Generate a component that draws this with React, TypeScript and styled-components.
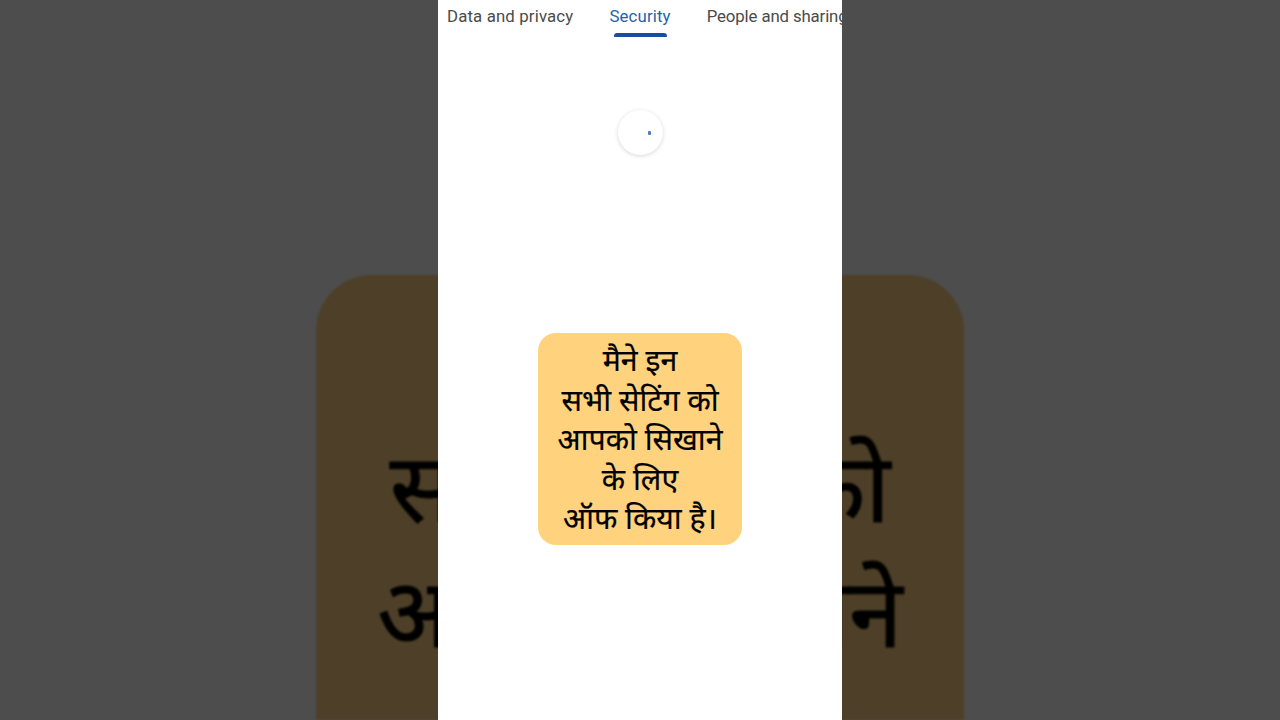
import styled, { createGlobalStyle } from 'styled-components'

const lines = ['मैने इन', 'सभी सेटिंग को', 'आपको सिखाने', 'के लिए', 'ऑफ किया है।']
const tabs = [
    { label: 'Data and privacy', active: false, tracking: 0.15 },
    { label: 'Security', active: true, tracking: 0.15 },
    { label: 'People and sharing', active: false, tracking: -0.12 },
]

const GlobalStyle = createGlobalStyle`
    html, body {
        margin: 0;
        height: 100%;
        background: #4d4d4d;
        overflow: hidden;
    }
    #root {
        height: 100%;
    }
`

const App = () => {
    return (
        <Stage>
            <GlobalStyle />
            <Backdrop>
                <BackdropCard>
                    {lines.map((line) => (
                        <BackdropLine key={line}>{line}</BackdropLine>
                    ))}
                </BackdropCard>
            </Backdrop>
            <Phone>
                <TabBar>
                    {tabs.map((tab) => (
                        <Tab key={tab.label} $active={tab.active} $tracking={tab.tracking}>
                            {tab.label}
                        </Tab>
                    ))}
                </TabBar>
                <SpinnerRow>
                    <Spinner>
                        <SpinnerDot />
                    </Spinner>
                </SpinnerRow>
                <Caption>
                    {lines.map((line) => (
                        <CaptionLine key={line}>{line}</CaptionLine>
                    ))}
                </Caption>
            </Phone>
        </Stage>
    )
}

export default App

const Stage = styled.div`
    position: relative;
    width: 1280px;
    height: 720px;
    overflow: hidden;
    background: #4d4d4d;
    font-family: Roboto, 'Noto Sans', sans-serif;
`

const Backdrop = styled.div`
    display: flex;
    justify-content: center;
    height: 720px;
    padding-top: 275px;
    box-sizing: border-box;
    overflow: hidden;
    filter: blur(1.2px);
`

const BackdropCard = styled.div`
    flex: none;
    width: 648px;
    height: 673px;
    box-sizing: border-box;
    padding-top: 35px;
    border-radius: 56px;
    background: #4e4028;
    text-align: center;
`

const BackdropLine = styled.div`
    font-family: 'Noto Sans Devanagari', 'Noto Sans', 'Lohit Devanagari', sans-serif;
    font-size: 96.5px;
    line-height: 125.5px;
    color: #000;
    white-space: nowrap;
    -webkit-text-stroke: 1px #000;
`

const Phone = styled.main`
    position: absolute;
    top: 0;
    left: 438px;
    display: flex;
    flex-direction: column;
    align-items: center;
    width: 404px;
    height: 720px;
    overflow: hidden;
    background: #fff;
`

const TabBar = styled.nav`
    display: flex;
    align-self: flex-start;
    gap: 36px;
    height: 37px;
    padding-left: 9px;
    white-space: nowrap;
`

const Tab = styled.div<{ $active: boolean; $tracking: number }>`
    position: relative;
    padding-top: 5.5px;
    font-size: 16.8px;
    line-height: 20px;
    letter-spacing: ${({ $tracking }) => $tracking}px;
    color: ${({ $active }) => ($active ? '#1f62ad' : '#4a4a4a')};

    &::after {
        content: '';
        display: ${({ $active }) => ($active ? 'block' : 'none')};
        position: absolute;
        left: 5px;
        right: 4px;
        bottom: 0;
        height: 4px;
        border-radius: 4px 4px 1px 1px;
        background: #14509f;
    }
`

const SpinnerRow = styled.div`
    display: flex;
    justify-content: center;
    padding-top: 73px;
`

const Spinner = styled.div`
    display: flex;
    align-items: center;
    justify-content: flex-end;
    width: 45px;
    height: 45px;
    box-sizing: border-box;
    padding-right: 12px;
    border-radius: 50%;
    background: #fff;
    box-shadow: 0 1px 4px rgba(0, 0, 0, 0.16);
`

const SpinnerDot = styled.span`
    width: 3px;
    height: 4px;
    border-radius: 1px;
    background: #5478bd;
`

const Caption = styled.div`
    width: 204px;
    height: 212px;
    box-sizing: border-box;
    margin-top: 178px;
    padding-top: 11px;
    border-radius: 18px;
    background: #ffd27d;
    text-align: center;
`

const CaptionLine = styled.div`
    font-family: 'Noto Sans Devanagari', 'Noto Sans', 'Lohit Devanagari', sans-serif;
    font-size: 30.3px;
    line-height: 39.5px;
    color: #000;
    white-space: nowrap;
    -webkit-text-stroke: 0.2px #000;
`
